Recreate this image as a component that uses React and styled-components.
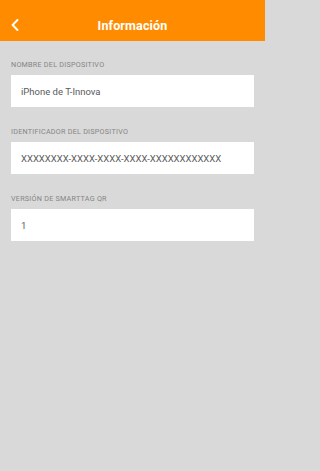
import React from 'react'
import styled, { createGlobalStyle } from 'styled-components'

const GlobalStyle = createGlobalStyle`
  html, body {
    margin: 0;
    padding: 0;
    background: #d9d9d9;
    font-family: Roboto, "Liberation Sans", sans-serif;
  }
`;

const fields = [
  { label: 'Nombre del dispositivo', value: 'iPhone de T-Innova' },
  { label: 'Identificador del dispositivo', value: 'XXXXXXXX-XXXX-XXXX-XXXX-XXXXXXXXXXXX' },
  { label: 'Versión de SmartTag QR', value: '1' },
];

const App = () => {
  return (
    <Screen>
      <GlobalStyle />
      <Header>
        <BackButton aria-label="Volver">
          <svg width="8" height="12" viewBox="0 0 8 12" fill="none">
            <path d="M6.5 1L1.6 6l4.9 5" stroke="#fff" strokeWidth="1.9" strokeLinecap="round" strokeLinejoin="round" />
          </svg>
        </BackButton>
        <Title>Información</Title>
      </Header>

      <Content>
        {fields.map(field => (
          <Section key={field.label}>
            <Label>{field.label}</Label>
            <Field>{field.value}</Field>
          </Section>
        ))}
      </Content>
    </Screen>
  );
};

const Screen = styled.div`
  width: 265px;
  min-height: 471px;
  background: #d9d9d9;
`;

const Header = styled.header`
  position: relative;
  height: 41px;
  background: #ff8c00;
  display: flex;
  align-items: center;
  justify-content: center;
`;

const BackButton = styled.button`
  position: absolute;
  left: 10px;
  top: 18px;
  background: none;
  border: none;
  padding: 1px;
  display: flex;
  cursor: pointer;
`;

const Title = styled.h1`
  margin: 0;
  padding-top: 10px;
  color: #fff;
  font-size: 12.5px;
  font-weight: 700;
  letter-spacing: 0.15px;
`;

const Content = styled.main`
  padding: 19px 11px 0;
  display: flex;
  flex-direction: column;
  gap: 20px;
`;

const Section = styled.section`
  display: flex;
  flex-direction: column;
  gap: 5px;
`;

const Label = styled.div`
  height: 10px;
  line-height: 10px;
  font-size: 7.2px;
  text-transform: uppercase;
  letter-spacing: 0.25px;
  color: #858585;
`;

const Field = styled.div`
  height: 32px;
  background: #fff;
  display: flex;
  align-items: center;
  padding: 0 10px;
  font-size: 9.5px;
  color: #5a5a5a;
`;

export default App;
